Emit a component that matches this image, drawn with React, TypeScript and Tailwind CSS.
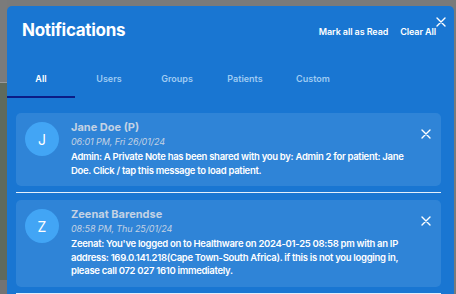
import React from "react";

function XIcon({ size = 10 }: { size?: number }) {
  return (
    <svg width={size} height={size} viewBox="0 0 10 10" fill="none">
      <path d="M1 1L9 9M9 1L1 9" stroke="white" strokeWidth="1.4" strokeLinecap="round" />
    </svg>
  );
}

type Note = {
  initial: string;
  name: string;
  time: string;
  lines: string;
};

const notes: Note[] = [
  {
    initial: "J",
    name: "Jane Doe (P)",
    time: "06:01 PM, Fri 26/01/24",
    lines:
      "Admin: A Private Note has been shared with you by: Admin 2 for patient: Jane Doe. Click / tap this message to load patient.",
  },
  {
    initial: "Z",
    name: "Zeenat Barendse",
    time: "08:58 PM, Thu 25/01/24",
    lines:
      "Zeenat: You've logged on to Healthware on 2024-01-25 08:58 pm with an IP address: 169.0.141.218(Cape Town-South Africa). if this is not you logging in, please call 072 027 1610 immediately.",
  },
];

const tabs = ["All", "Users", "Groups", "Patients", "Custom"];

export default function App() {
  return (
    <div
      className="w-[456px] h-[294px] overflow-hidden flex bg-[#7a7a7a]"
      style={{ fontFamily: "Inter, 'Noto Sans', sans-serif" }}
    >
      <div className="w-[7px] flex flex-col shrink-0">
        <div className="h-[82px] bg-[#7b7b7b]" />
        <div className="h-px bg-[#9a9a9a]" />
        <div className="h-[197px] bg-[#5f6a5c]" />
        <div className="flex-1 bg-[#737373]" />
      </div>
      <div className="mt-[6px] w-[447px] h-[300px] rounded-t-[5px] bg-[#1976d2] flex flex-col shrink-0">
        <div className="relative flex items-end justify-between pl-[15px] pr-[18px] pt-[13px]">
          <div className="text-white font-bold text-[17px] tracking-[-0.3px] leading-[22px]">Notifications</div>
          <div className="flex items-center gap-[12px] text-white text-[9px] tracking-[-0.1px] font-semibold leading-[12px] pb-[3px]">
            <span>Mark all as Read</span>
            <span>Clear All</span>
          </div>
          <div className="absolute right-[8px] top-[11px]">
            <XIcon size={10} />
          </div>
        </div>
        <div className="flex mt-[21px] h-[36px]">
          {tabs.map((t, i) => (
            <div
              key={t}
              className={
                "w-[68px] flex items-center justify-center text-[9px] font-semibold border-b-2 " +
                (i === 0 ? "text-white border-[#0b1c86]" : "text-[#9fcbf2] border-transparent")
              }
            >
              {t}
            </div>
          ))}
        </div>
        <div className="flex flex-col mt-[15px] pl-[9px] pr-[13px]">
          {notes.map((n) => (
            <div key={n.name} className="flex flex-col">
              <div className="bg-[#2f84d7] rounded-[5px] flex items-start pl-[9px] pr-[10px] pt-[7px] pb-[9px]">
                <div className="w-[34px] h-[34px] mt-[2px] rounded-full bg-[#42a5f5] text-white flex items-center justify-center text-[14px] shrink-0">
                  {n.initial}
                </div>
                <div className="ml-[12px] flex-1 flex flex-col">
                  <div className="text-[#c3d2e4] font-bold text-[11px] leading-[14px]">{n.name}</div>
                  <div className="text-[#c3d2e4] italic text-[9px] tracking-[-0.1px] leading-[14px] mt-[1px]">{n.time}</div>
                  <div className="text-white font-semibold text-[9.5px] tracking-[-0.3px] leading-[13.5px] mt-[1px]">{n.lines}</div>
                </div>
                <div className="mt-[9px] ml-[8px] shrink-0">
                  <XIcon size={10} />
                </div>
              </div>
              <div className="h-px bg-[#e3effb] mt-[6px] mb-[7px]" />
            </div>
          ))}
        </div>
      </div>
    </div>
  );
}
